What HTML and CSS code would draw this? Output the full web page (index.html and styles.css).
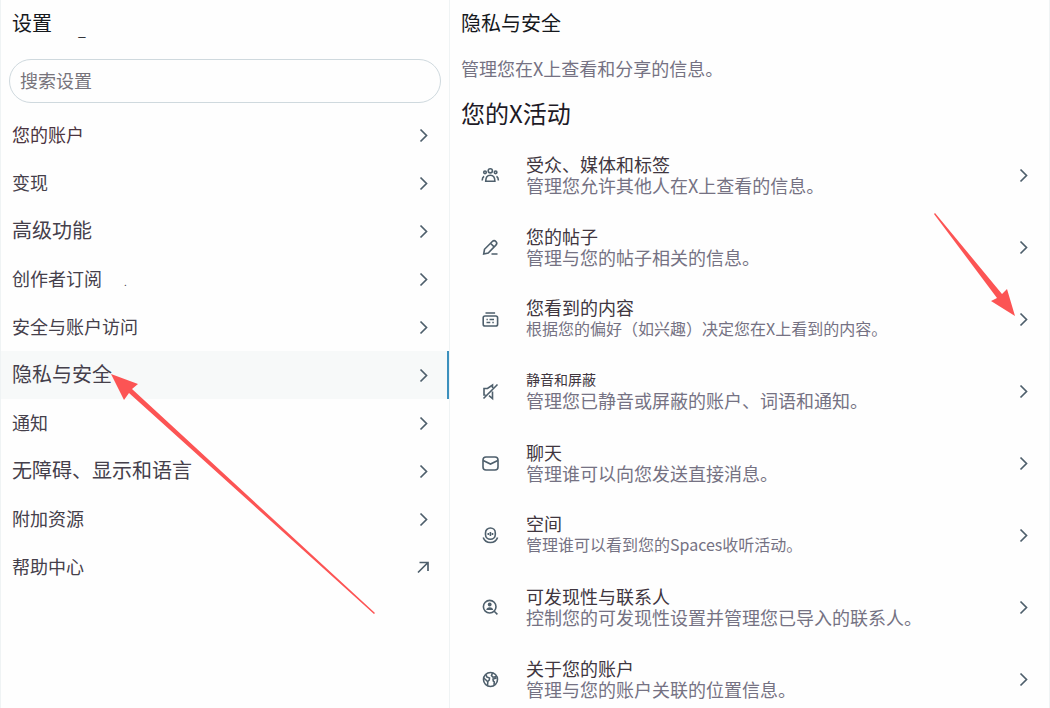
FILE: index.html
```html
<!DOCTYPE html>
<html lang="zh-CN">
<head>
    <meta charset="UTF-8">
    <meta name="viewport" content="width=device-width, initial-scale=1.0">
    <title>隐私与安全</title>
    <link rel="stylesheet" href="styles.css">
</head>
<body>
    <svg class="symbols" aria-hidden="true">
        <symbol id="chevron" viewBox="0 0 20 20"><path d="M7.500 4.500l6 6-6 6"/></symbol>
        <symbol id="external" viewBox="0 0 20 20"><path d="M5 15.500L14.500 6M6.500 5.500h8.500v8.500"/></symbol>
    </svg>

    <div class="page">
        <aside class="sidebar">
            <h1 class="title">设置<span class="cursor">_</span></h1>
            <input class="search" type="text" placeholder="搜索设置" aria-label="搜索设置">
            <nav>
                <a class="nav-item warm" href="#"><span class="label">您的账户</span><svg class="arrow"><use href="#chevron"/></svg></a>
                <a class="nav-item" href="#"><span class="label">变现</span><svg class="arrow"><use href="#chevron"/></svg></a>
                <a class="nav-item large" href="#"><span class="label">高级功能</span><svg class="arrow"><use href="#chevron"/></svg></a>
                <a class="nav-item" href="#"><span class="label">创作者订阅<span class="dot">.</span></span><svg class="arrow"><use href="#chevron"/></svg></a>
                <a class="nav-item" href="#"><span class="label">安全与账户访问</span><svg class="arrow"><use href="#chevron"/></svg></a>
                <a class="nav-item large active" href="#"><span class="label">隐私与安全</span><svg class="arrow"><use href="#chevron"/></svg>
                    <svg class="pointer pointer-left" viewBox="0 0 264 240" aria-hidden="true"><path d="M0 0l27 10-6 5 243 224-1 1L18 19l-5 7z"/></svg>
                </a>
                <a class="nav-item" href="#"><span class="label">通知</span><svg class="arrow"><use href="#chevron"/></svg></a>
                <a class="nav-item large" href="#"><span class="label">无障碍、显示和语言</span><svg class="arrow"><use href="#chevron"/></svg></a>
                <a class="nav-item" href="#"><span class="label">附加资源</span><svg class="arrow"><use href="#chevron"/></svg></a>
                <a class="nav-item" href="#"><span class="label">帮助中心</span><svg class="arrow"><use href="#external"/></svg></a>
            </nav>
        </aside>

        <main class="content">
            <h1 class="title">隐私与安全</h1>
            <p class="intro">管理您在X上查看和分享的信息。</p>
            <h2 class="section">您的X活动</h2>

            <a class="option" href="#">
                <svg class="icon" viewBox="0 0 20 20"><circle cx="10.300" cy="5.800" r="2.100"/><circle cx="5" cy="7.300" r="1.300"/><circle cx="15.600" cy="7.300" r="1.300"/><path d="M5.700 16.300c0-4 1.600-6 4.600-6s4.600 2 4.600 6zM2.200 15.500c0-2 .5-3.500 1.900-4.300M18.400 15.500c0-2-.5-3.500-1.900-4.300"/></svg>
                <span class="text"><strong>受众、媒体和标签</strong><span>管理您允许其他人在X上查看的信息。</span></span>
                <svg class="arrow"><use href="#chevron"/></svg>
            </a>
            <a class="option" href="#">
                <svg class="icon" viewBox="0 0 20 20"><path d="M3.700 17l.8-4.700 7.800-7.800c1-1 2.600-1 3.600 0s1 2.600 0 3.600L8.200 16zM10.500 6.300l3.600 3.600M11.500 17h6"/></svg>
                <span class="text"><strong>您的帖子</strong><span>管理与您的帖子相关的信息。</span></span>
                <svg class="arrow"><use href="#chevron"/></svg>
            </a>
            <a class="option" href="#">
                <svg class="icon" viewBox="0 0 20 20"><rect x="3.200" y="7" width="14.400" height="10" rx="1.800"/><path d="M5.500 4h9.600M6.500 10.500h1.300M9.500 10.500h4.500M6.500 13.500h3.800M12.300 13.500h1.500"/></svg>
                <span class="text small-desc"><strong>您看到的内容</strong><span>根据您的偏好（如兴趣）决定您在X上看到的内容。</span></span>
                <svg class="arrow"><use href="#chevron"/></svg>
                <svg class="pointer pointer-right" viewBox="0 0 82 104" aria-hidden="true"><path d="M0 1l1-1 67 81 5-5 8 27-24-15 6-3z"/></svg>
            </a>
            <a class="option" href="#">
                <svg class="icon" viewBox="0 0 20 20"><path d="M3.500 17.500l14-14M5.500 14H4V7.500h3.500L12.500 4v3M12.500 10.500V17.500l-3.500-2.800"/></svg>
                <span class="text small-title"><strong>静音和屏蔽</strong><span>管理您已静音或屏蔽的账户、词语和通知。</span></span>
                <svg class="arrow"><use href="#chevron"/></svg>
            </a>
            <a class="option" href="#">
                <svg class="icon" viewBox="0 0 20 20"><rect x="3" y="4" width="15" height="13" rx="3"/><path d="M3.200 7.500l7.300 3.500 7.300-3.500"/></svg>
                <span class="text"><strong>聊天</strong><span>管理谁可以向您发送直接消息。</span></span>
                <svg class="arrow"><use href="#chevron"/></svg>
            </a>
            <a class="option" href="#">
                <svg class="icon" viewBox="0 0 20 20"><rect x="5.500" y="3" width="9.800" height="11.300" rx="4.900"/><path d="M8.300 8v2M10.400 7v4M12.500 8v2M3.200 12.500c1.200 3.300 3.700 5 7.200 5s6-1.700 7.200-5"/></svg>
                <span class="text small-desc"><strong>空间</strong><span>管理谁可以看到您的Spaces收听活动。</span></span>
                <svg class="arrow"><use href="#chevron"/></svg>
            </a>
            <a class="option" href="#">
                <svg class="icon" viewBox="0 0 20 20"><circle cx="9.700" cy="9.700" r="6.300"/><path d="M14.200 14.200l3.200 3.200"/><circle class="solid" cx="9.700" cy="7.500" r="1.900"/><path class="solid" d="M6.200 13c.4-2 1.500-2.800 3.500-2.800s3.100.8 3.500 2.800z"/></svg>
                <span class="text"><strong>可发现性与联系人</strong><span>控制您的可发现性设置并管理您已导入的联系人。</span></span>
                <svg class="arrow"><use href="#chevron"/></svg>
            </a>
            <a class="option" href="#">
                <svg class="icon" viewBox="0 0 20 20"><circle cx="10.500" cy="10.500" r="7"/><path d="M6 5.500l.8 2.500 2.700 1-.2 2-1.500 1.500-.3 4.300M3.700 9l2.300 2 1.500 1.500M12.500 4l-1 2.500 1.500 1.700 3.500-.7M16.500 9l-3.500 1 .3 2 1 .8-.3 3"/></svg>
                <span class="text"><strong>关于您的账户</strong><span>管理与您的账户关联的位置信息。</span></span>
                <svg class="arrow"><use href="#chevron"/></svg>
            </a>
        </main>
    </div>
</body>
</html>
```

FILE: styles.css
```css
* {
    box-sizing: border-box;
}

body {
    margin: 0;
    background-color: #fefefe;
    color: #45404b;
    font-family: "Noto Sans CJK SC", sans-serif;
    font-size: 18px;
}

a {
    color: inherit;
    text-decoration: none;
}

svg {
    fill: none;
    stroke: #4e5f6c;
    flex-shrink: 0;
}

.symbols {
    position: absolute;
    width: 0;
    height: 0;
}

.page {
    display: grid;
    grid-template-columns: 3fr 4fr;
    min-height: 100vh;
}

.sidebar {
    border-left: 1px solid #eff3f4;
    border-right: 1px solid #eff3f4;
}

.content {
    border-right: 1px solid #eff3f4;
}

.title {
    height: 46px;
    margin: 0;
    padding: 0 11px;
    color: #16191d;
    font-size: 20px;
    font-weight: 400;
    line-height: 46px;
}

.cursor {
    margin-left: 26px;
    font-size: 14px;
    line-height: 1;
    vertical-align: sub;
}

/* Sidebar */
.search {
    display: block;
    width: calc(100% - 16px);
    height: 44px;
    margin: 13px 8px 8px;
    padding: 0 10px 2px;
    border: 1px solid #cfd9de;
    border-radius: 22px;
    background-color: #fefefe;
    font-family: inherit;
    font-size: 18px;
}

.search::placeholder {
    color: #77747b;
}

.nav-item {
    position: relative;
    display: flex;
    align-items: center;
    justify-content: space-between;
    height: 48px;
    padding: 0 16px 0 11px;
}

.nav-item.large {
    font-size: 20px;
}

.nav-item.warm {
    color: #4b3440;
}

.nav-item.active {
    background-color: #f7f9f9;
    border-right: 2px solid #3c90bd;
    padding-right: 14px;
}

.label {
    padding-bottom: 3px;
}

.dot {
    margin-left: 22px;
    font-size: 10px;
}

.arrow {
    width: 20px;
    height: 20px;
    stroke-width: 1.7;
}

/* Options */
.intro {
    margin: 0;
    padding: 0 11px;
    color: #757283;
    line-height: 44px;
}

.section {
    margin: 0 0 3px;
    padding: 0 11px;
    color: #1d1a26;
    font-size: 24px;
    font-weight: 400;
    line-height: 46px;
}

.option {
    position: relative;
    display: flex;
    align-items: center;
    min-height: 72px;
    padding: 0 16px 0 30px;
}

.icon {
    width: 20px;
    height: 20px;
    margin-right: 26px;
    stroke-width: 1.6;
}

.icon .solid {
    fill: #4e5f6c;
    stroke: none;
}

.text {
    display: flex;
    flex-direction: column;
    flex: 1;
    padding-bottom: 1px;
    color: #757283;
    line-height: 21px;
}

.text strong {
    color: #40363f;
    font-weight: 400;
}

.small-desc,
.small-title {
    padding-bottom: 3px;
}

.small-desc span {
    font-size: 16px;
}

.small-title strong {
    font-size: 14px;
}

/* Red pointers lying over the rows */
.pointer {
    position: absolute;
    z-index: 1;
    fill: #fc5454;
    stroke: none;
    pointer-events: none;
}

.pointer-left {
    top: 23px;
    left: 110px;
    width: 264px;
    height: 240px;
}

.pointer-right {
    top: -70px;
    right: 33px;
    width: 82px;
    height: 104px;
}
```
